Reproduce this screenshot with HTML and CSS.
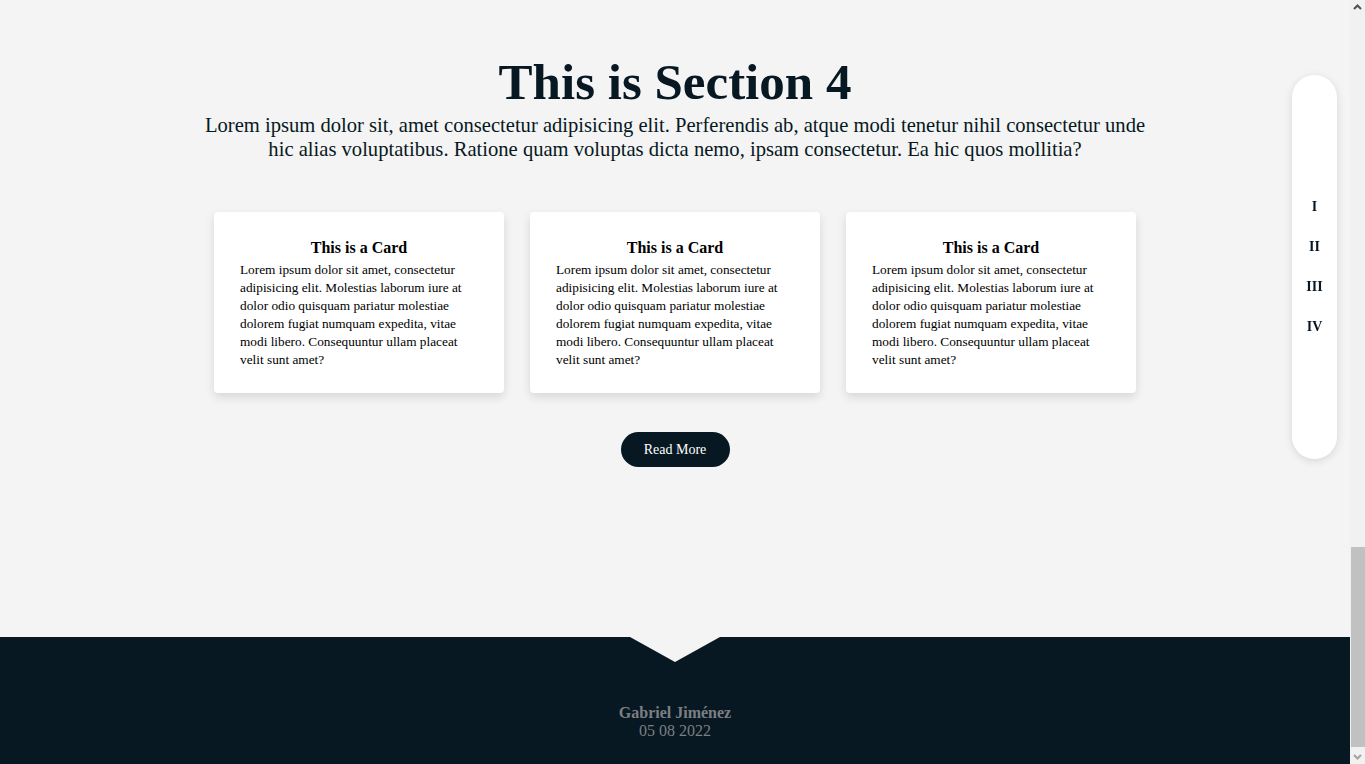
FILE: index.html
```html
<!DOCTYPE html>
<html lang="en">
<head>
<meta charset="utf-8">
<title>This is Section 4</title>
<link rel="stylesheet" href="styles.css">
</head>
<body>
<div class="page">
  <section class="section" id="s4">
    <h1 class="title">This is Section 4</h1>
    <p class="lead">Lorem ipsum dolor sit, amet consectetur adipisicing elit. Perferendis ab, atque modi tenetur nihil consectetur unde hic alias voluptatibus. Ratione quam voluptas dicta nemo, ipsam consectetur. Ea hic quos mollitia?</p>
    <div class="cards">
      <article class="card"><h3 class="card-title">This is a Card</h3><p class="card-text">Lorem ipsum dolor sit amet, consectetur adipisicing elit. Molestias laborum iure at dolor odio quisquam pariatur molestiae dolorem fugiat numquam expedita, vitae modi libero. Consequuntur ullam placeat velit sunt amet?</p></article>
      <article class="card"><h3 class="card-title">This is a Card</h3><p class="card-text">Lorem ipsum dolor sit amet, consectetur adipisicing elit. Molestias laborum iure at dolor odio quisquam pariatur molestiae dolorem fugiat numquam expedita, vitae modi libero. Consequuntur ullam placeat velit sunt amet?</p></article>
      <article class="card"><h3 class="card-title">This is a Card</h3><p class="card-text">Lorem ipsum dolor sit amet, consectetur adipisicing elit. Molestias laborum iure at dolor odio quisquam pariatur molestiae dolorem fugiat numquam expedita, vitae modi libero. Consequuntur ullam placeat velit sunt amet?</p></article>
    </div>
    <a class="btn" href="#">Read More</a>
  </section>
  <footer class="footer">
    <div class="notch"></div>
    <p class="author">Gabriel Jiménez</p>
    <p class="date">05 08 2022</p>
  </footer>
</div>
<div class="scrollbar">
  <div class="sb-btn sb-up">
    <svg width="15" height="15" viewBox="0 0 15 15"><polyline points="4,9 7.5,5.5 11,9" fill="none" stroke="#505050" stroke-width="2"/></svg>
  </div>
  <div class="sb-track"><div class="sb-thumb"></div></div>
  <div class="sb-btn sb-down">
    <svg width="15" height="15" viewBox="0 0 15 15"><polyline points="4,6 7.5,9.5 11,6" fill="none" stroke="#a3a3a3" stroke-width="2"/></svg>
  </div>
</div>
<nav class="side-nav">
  <a class="side-link" href="#s1">I</a>
  <a class="side-link" href="#s2">II</a>
  <a class="side-link" href="#s3">III</a>
  <a class="side-link" href="#s4">IV</a>
</nav>
</body>
</html>
```
FILE: styles.css
```css
* { box-sizing: border-box; }
html, body { margin: 0; padding: 0; }
body {
  display: flex;
  height: 764px;
  overflow: hidden;
  background: #f4f4f4;
  font-family: "Liberation Serif", "Times New Roman", serif;
  color: #071822;
}
.page {
  flex: 1;
  display: flex;
  flex-direction: column;
}
.section {
  height: 637px;
  padding-top: 53px;
  display: flex;
  flex-direction: column;
  align-items: center;
}
.title {
  margin: 0;
  font-size: 51px;
  line-height: 58px;
  font-weight: bold;
  color: #071822;
}
.lead {
  margin: 2px 0 0;
  width: 950px;
  text-align: center;
  font-size: 20.6px;
  line-height: 24px;
  color: #071822;
}
.cards {
  display: flex;
  gap: 26px;
  margin-top: 51px;
}
.card {
  width: 290px;
  background: #fff;
  border-radius: 4px;
  padding: 27px 26px 24px;
  box-shadow: 0 4px 10px rgba(0, 0, 0, 0.12);
}
.card-title {
  margin: 0 0 4px;
  text-align: center;
  font-size: 16px;
  line-height: 18px;
  color: #000;
}
.card-text {
  margin: 0;
  font-size: 13.3px;
  line-height: 18px;
  color: #000;
}
.btn {
  margin-top: 39px;
  display: inline-flex;
  align-items: center;
  justify-content: center;
  width: 109px;
  height: 35px;
  border-radius: 18px;
  background: #071822;
  color: #fff;
  font-size: 14px;
  text-decoration: none;
}
.footer {
  position: relative;
  height: 127px;
  background: #071822;
  padding-top: 67px;
  text-align: center;
  color: #7b7f82;
}
.notch {
  position: absolute;
  top: 0;
  left: 50%;
  transform: translateX(-50%);
  width: 90px;
  height: 25px;
  background: #f4f4f4;
  clip-path: polygon(0 0, 100% 0, 50% 100%);
}
.author {
  margin: 0;
  font-size: 16px;
  line-height: 18px;
  font-weight: bold;
}
.date {
  margin: 0;
  font-size: 16px;
  line-height: 18px;
}
.scrollbar {
  width: 15px;
  flex: none;
  display: flex;
  flex-direction: column;
  background: #f1f1f1;
}
.sb-btn {
  height: 15px;
  flex: none;
}
.sb-btn svg { display: block; }
.sb-track {
  flex: 1;
  display: flex;
  flex-direction: column;
  justify-content: flex-end;
  padding: 0 0 2px 1px;
}
.sb-thumb {
  height: 200px;
  background: #c1c1c1;
}
.side-nav {
  position: fixed;
  top: 75px;
  right: 28px;
  width: 45px;
  height: 384px;
  background: #fff;
  border-radius: 23px;
  box-shadow: 0 2px 8px rgba(0, 0, 0, 0.12);
  display: flex;
  flex-direction: column;
  align-items: center;
  justify-content: center;
  gap: 24px;
  z-index: 10;
}
.side-link {
  font-size: 14px;
  line-height: 16px;
  font-weight: bold;
  color: #071822;
  text-decoration: none;
}
```
